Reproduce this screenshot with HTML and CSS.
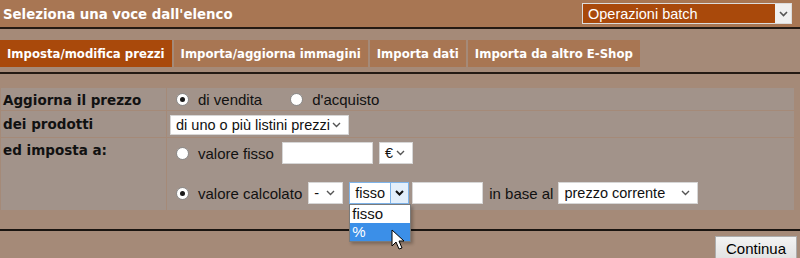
FILE: index.html
```html
<!DOCTYPE html>
<html lang="it">
<head>
    <meta charset="UTF-8">
    <title>Operazioni batch</title>
    <link rel="stylesheet" href="styles.css">
</head>
<body>
    <header class="topbar">
        <h1 class="title">Seleziona una voce dall'elenco</h1>
        <div class="batch-select">
            <span class="batch-text">Operazioni batch</span>
            <span class="batch-arrow"><svg width="9" height="6" viewBox="0 0 9 6"><polyline points="1,1 4.5,4.5 8,1" fill="none" stroke="#555" stroke-width="1.6"/></svg></span>
        </div>
    </header>

    <div class="page">
        <nav class="tabs">
            <a class="tab active" href="#">Imposta/modifica prezzi</a>
            <a class="tab" href="#">Importa/aggiorna immagini</a>
            <a class="tab" href="#">Importa dati</a>
            <a class="tab" href="#">Importa da altro E-Shop</a>
        </nav>

        <table class="price-form">
            <tr class="row-price">
                <th>Aggiorna il prezzo</th>
                <td>
                    <span class="radio checked"></span><span class="opt-label">di vendita</span>
                    <span class="radio second"></span><span class="opt-label">d'acquisto</span>
                </td>
            </tr>
            <tr class="row-products">
                <th>dei prodotti</th>
                <td>
                    <span class="select sel-listini">di uno o più listini prezzi<svg class="chev" width="9" height="6" viewBox="0 0 9 6"><polyline points="1,1 4.5,4.5 8,1" fill="none" stroke="#555" stroke-width="1.4"/></svg></span>
                </td>
            </tr>
            <tr class="row-set">
                <th>ed imposta a:</th>
                <td>
                    <div class="line">
                        <span class="radio"></span><span class="opt-label">valore fisso</span>
                        <span class="input in-fisso"></span>
                        <span class="select sel-euro">€<svg class="chev" width="9" height="6" viewBox="0 0 9 6"><polyline points="1,1 4.5,4.5 8,1" fill="none" stroke="#555" stroke-width="1.4"/></svg></span>
                    </div>
                    <div class="line second-line">
                        <span class="radio checked"></span><span class="opt-label">valore calcolato</span>
                        <span class="select sel-sign">-<svg class="chev" width="9" height="6" viewBox="0 0 9 6"><polyline points="1,1 4.5,4.5 8,1" fill="none" stroke="#555" stroke-width="1.4"/></svg></span>
                        <span class="select sel-mode open">fisso<span class="open-arrow"><svg width="9" height="6" viewBox="0 0 9 6"><polyline points="1,1 4.5,4.5 8,1" fill="none" stroke="#111" stroke-width="2"/></svg></span>
                            <span class="dropdown">
                                <span class="dd-item">fisso</span>
                                <span class="dd-item picked">%</span>
                                <svg class="cursor" width="15" height="22" viewBox="0 0 15 22"><path d="M1 1 L1 17 L5 13 L8 20 L11 19 L8 12 L13 12 Z" fill="#fff" stroke="#000" stroke-width="1"/></svg>
                            </span>
                        </span>
                        <span class="input in-calc"></span>
                        <span class="opt-label base">in base al</span>
                        <span class="select sel-base">prezzo corrente<svg class="chev" width="9" height="6" viewBox="0 0 9 6"><polyline points="1,1 4.5,4.5 8,1" fill="none" stroke="#555" stroke-width="1.4"/></svg></span>
                    </div>
                </td>
            </tr>
        </table>

        <div class="actions">
            <button class="btn">Continua</button>
        </div>
    </div>
</body>
</html>
```

FILE: styles.css
```css
  body {
      margin: 0;
      width: 800px;
      height: 258px;
      overflow: hidden;
      font-family: 'Liberation Sans', Arial, sans-serif;
      background-color: #a58a78;
  }
  .topbar {
      height: 27px;
      background-color: #a87653;
      border-bottom: 2px solid #241a13;
      display: flex;
      align-items: center;
      justify-content: space-between;
      padding: 0 8px 0 3px;
  }
  .title {
      margin: 0;
      font-family: 'DejaVu Sans Condensed', 'DejaVu Sans', sans-serif;
      font-stretch: condensed;
      font-size: 14.8px;
      font-weight: bold;
      color: white;
  }
  .batch-select {
      width: 208px;
      height: 19px;
      border: 1px solid #dcdcdc;
      background-color: #a9490b;
      display: flex;
      align-items: center;
      justify-content: space-between;
  }
  .batch-text {
      color: white;
      font-size: 14.5px;
      padding-left: 5px;
  }
  .batch-arrow {
      width: 16px;
      height: 19px;
      background-color: #f0f0f0;
      display: flex;
      align-items: center;
      justify-content: center;
  }
  .tabs {
      display: flex;
      gap: 2px;
      padding-top: 11px;
      padding-bottom: 5px;
      border-bottom: 2px solid #241a13;
  }
  .tab {
      height: 27px;
      line-height: 27px;
      padding: 0 7px;
      background-color: #a87653;
      color: white;
      text-decoration: none;
      font-family: 'DejaVu Sans Condensed', 'DejaVu Sans', sans-serif;
      font-stretch: condensed;
      font-size: 13px;
      font-weight: bold;
  }
  .tab.active {
      background-color: #a9490b;
  }
  .price-form {
      margin-top: 13px;
      width: 795px;
      border-spacing: 1px;
  }
  .price-form th, .price-form td {
      background-color: #a2938a;
      padding: 0;
  }
  .price-form th {
      width: 163px;
      padding-left: 2px;
      text-align: left;
      font-family: 'DejaVu Sans', Verdana, sans-serif;
      font-size: 13.5px;
      line-height: 16px;
      color: #111;
  }
  .price-form td {
      padding-left: 3px;
      font-size: 15px;
      color: #111;
  }
  .row-price th, .row-price td {
      height: 22px;
  }
  .row-price th {
      padding-top: 2px;
      height: 20px;
  }
  .row-products th, .row-products td {
      height: 26px;
  }
  .row-set th, .row-set td {
      height: 68px;
      vertical-align: top;
  }
  .row-set th {
      padding-top: 4px;
  }
  .row-price td {
      display: flex;
      align-items: center;
  }
  .line {
      display: flex;
      align-items: center;
      height: 22px;
      margin-top: 4px;
  }
  .line.second-line {
      margin-top: 18px;
  }
  .radio {
      width: 11px;
      height: 11px;
      border-radius: 50%;
      border: 1px solid #8c8c8c;
      background: radial-gradient(circle, #fff 60%, #ececec);
      margin: 0 9px 0 6px;
      display: flex;
      align-items: center;
      justify-content: center;
      flex: none;
  }
  .radio.checked::after {
      content: '';
      width: 5px;
      height: 5px;
      border-radius: 50%;
      background-color: #1a1a1a;
  }
  .radio.second {
      margin-left: 28px;
  }
  .opt-label {
      white-space: nowrap;
  }
  .select {
      position: relative;
      display: inline-flex;
      align-items: center;
      justify-content: space-between;
      box-sizing: border-box;
      height: 22px;
      padding: 0 7px 0 5px;
      background-color: white;
      border: 1px solid #d6d6d6;
      font-size: 14.5px;
      white-space: nowrap;
  }
  .chev {
      flex: none;
  }
  .sel-listini {
      width: 179px;
      height: 20px;
      margin-top: 1px;
  }
  .input {
      box-sizing: border-box;
      height: 22px;
      background-color: white;
      border: 1px solid #d6d6d6;
  }
  .in-fisso {
      width: 91px;
      margin-left: 8px;
  }
  .sel-euro {
      width: 34px;
      margin-left: 6px;
  }
  .sel-sign {
      width: 35px;
      margin-left: 6px;
  }
  .sel-mode {
      width: 60px;
      margin-left: 6px;
      padding-right: 0;
  }
  .sel-mode.open {
      border-color: #7eb4ea;
  }
  .open-arrow {
      width: 17px;
      height: 20px;
      background-color: #e3effb;
      border-left: 1px solid #7eb4ea;
      display: flex;
      align-items: center;
      justify-content: center;
  }
  .dropdown {
      position: absolute;
      top: 21px;
      left: -1px;
      width: 60px;
      border: 1px solid #7a7a7a;
      background-color: white;
      box-shadow: 2px 2px 3px rgba(0, 0, 0, 0.25);
      display: flex;
      flex-direction: column;
  }
  .dd-item {
      height: 18px;
      line-height: 18px;
      padding-left: 2px;
      font-size: 15px;
      color: #111;
  }
  .dd-item.picked {
      background-color: #3b8fe8;
      color: white;
  }
  .cursor {
      position: absolute;
      left: 41px;
      top: 24px;
  }
  .in-calc {
      width: 71px;
      margin-left: 3px;
  }
  .base {
      margin-left: 6px;
  }
  .sel-base {
      width: 140px;
      margin-left: 5px;
  }
  .actions {
      margin-top: 18px;
      border-top: 2px solid #1a1410;
      padding: 5px 3px 0 0;
      display: flex;
      justify-content: flex-end;
  }
  .btn {
      width: 82px;
      height: 24px;
      padding: 0;
      background: linear-gradient(#f3f3f3, #e2e2e2);
      border: 1px solid #adadad;
      font-family: 'Liberation Sans', Arial, sans-serif;
      font-size: 15px;
      color: #000;
  }
```
